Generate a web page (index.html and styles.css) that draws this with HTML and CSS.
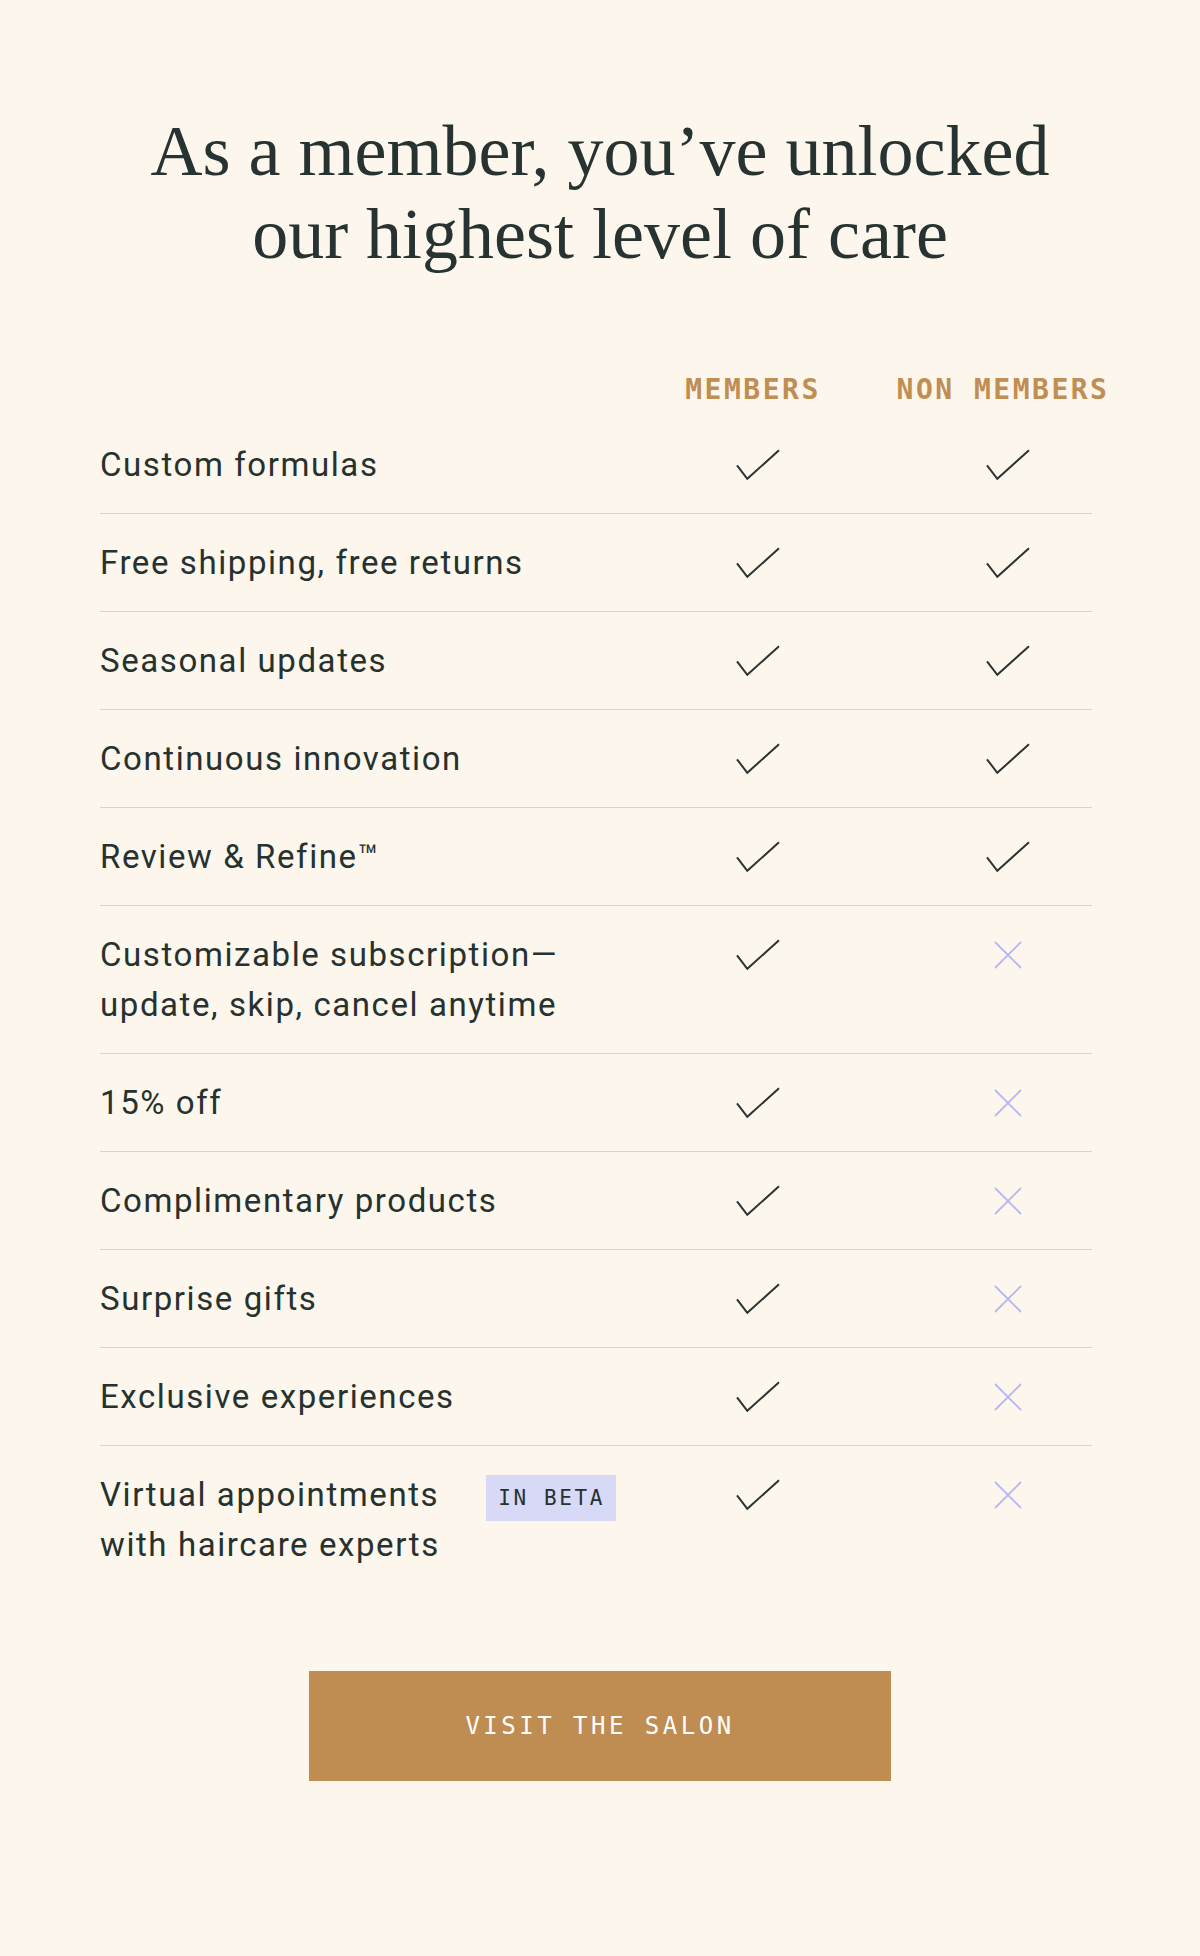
FILE: index.html
```html
<!DOCTYPE html>
<html lang="en">
<head>
<meta charset="utf-8">
<title>Membership comparison</title>
<link rel="stylesheet" href="styles.css">
</head>
<body>
<main class="page">
  <h1 class="title">As a member, you’ve unlocked<br>our highest level of care</h1>

  <section class="compare">
    <div class="compare-head">
      <span></span>
      <span class="col-label">MEMBERS</span>
      <span class="col-label">NON MEMBERS</span>
    </div>

    <div class="row">
      <div class="feature">Custom formulas</div>
      <div class="mark"><svg class="icon-check" viewBox="0 0 44 31" width="44" height="31"><path d="M1 16.3 L11.3 29.8 L43 1.2"/></svg></div>
      <div class="mark"><svg class="icon-check" viewBox="0 0 44 31" width="44" height="31"><path d="M1 16.3 L11.3 29.8 L43 1.2"/></svg></div>
    </div>
    <div class="row">
      <div class="feature">Free shipping, free returns</div>
      <div class="mark"><svg class="icon-check" viewBox="0 0 44 31" width="44" height="31"><path d="M1 16.3 L11.3 29.8 L43 1.2"/></svg></div>
      <div class="mark"><svg class="icon-check" viewBox="0 0 44 31" width="44" height="31"><path d="M1 16.3 L11.3 29.8 L43 1.2"/></svg></div>
    </div>
    <div class="row">
      <div class="feature">Seasonal updates</div>
      <div class="mark"><svg class="icon-check" viewBox="0 0 44 31" width="44" height="31"><path d="M1 16.3 L11.3 29.8 L43 1.2"/></svg></div>
      <div class="mark"><svg class="icon-check" viewBox="0 0 44 31" width="44" height="31"><path d="M1 16.3 L11.3 29.8 L43 1.2"/></svg></div>
    </div>
    <div class="row">
      <div class="feature">Continuous innovation</div>
      <div class="mark"><svg class="icon-check" viewBox="0 0 44 31" width="44" height="31"><path d="M1 16.3 L11.3 29.8 L43 1.2"/></svg></div>
      <div class="mark"><svg class="icon-check" viewBox="0 0 44 31" width="44" height="31"><path d="M1 16.3 L11.3 29.8 L43 1.2"/></svg></div>
    </div>
    <div class="row">
      <div class="feature">Review &amp; Refine™</div>
      <div class="mark"><svg class="icon-check" viewBox="0 0 44 31" width="44" height="31"><path d="M1 16.3 L11.3 29.8 L43 1.2"/></svg></div>
      <div class="mark"><svg class="icon-check" viewBox="0 0 44 31" width="44" height="31"><path d="M1 16.3 L11.3 29.8 L43 1.2"/></svg></div>
    </div>
    <div class="row">
      <div class="feature">Customizable subscription—update, skip, cancel anytime</div>
      <div class="mark"><svg class="icon-check" viewBox="0 0 44 31" width="44" height="31"><path d="M1 16.3 L11.3 29.8 L43 1.2"/></svg></div>
      <div class="mark"><svg class="icon-cross" viewBox="0 0 28 28" width="28" height="28"><path d="M1 1 L27 27 M27 1 L1 27"/></svg></div>
    </div>
    <div class="row">
      <div class="feature">15% off</div>
      <div class="mark"><svg class="icon-check" viewBox="0 0 44 31" width="44" height="31"><path d="M1 16.3 L11.3 29.8 L43 1.2"/></svg></div>
      <div class="mark"><svg class="icon-cross" viewBox="0 0 28 28" width="28" height="28"><path d="M1 1 L27 27 M27 1 L1 27"/></svg></div>
    </div>
    <div class="row">
      <div class="feature">Complimentary products</div>
      <div class="mark"><svg class="icon-check" viewBox="0 0 44 31" width="44" height="31"><path d="M1 16.3 L11.3 29.8 L43 1.2"/></svg></div>
      <div class="mark"><svg class="icon-cross" viewBox="0 0 28 28" width="28" height="28"><path d="M1 1 L27 27 M27 1 L1 27"/></svg></div>
    </div>
    <div class="row">
      <div class="feature">Surprise gifts</div>
      <div class="mark"><svg class="icon-check" viewBox="0 0 44 31" width="44" height="31"><path d="M1 16.3 L11.3 29.8 L43 1.2"/></svg></div>
      <div class="mark"><svg class="icon-cross" viewBox="0 0 28 28" width="28" height="28"><path d="M1 1 L27 27 M27 1 L1 27"/></svg></div>
    </div>
    <div class="row">
      <div class="feature">Exclusive experiences</div>
      <div class="mark"><svg class="icon-check" viewBox="0 0 44 31" width="44" height="31"><path d="M1 16.3 L11.3 29.8 L43 1.2"/></svg></div>
      <div class="mark"><svg class="icon-cross" viewBox="0 0 28 28" width="28" height="28"><path d="M1 1 L27 27 M27 1 L1 27"/></svg></div>
    </div>
    <div class="row">
      <div class="feature feature-badge">
        <span class="feature-text">Virtual appointments with haircare experts</span>
        <span class="badge">IN BETA</span>
      </div>
      <div class="mark"><svg class="icon-check" viewBox="0 0 44 31" width="44" height="31"><path d="M1 16.3 L11.3 29.8 L43 1.2"/></svg></div>
      <div class="mark"><svg class="icon-cross" viewBox="0 0 28 28" width="28" height="28"><path d="M1 1 L27 27 M27 1 L1 27"/></svg></div>
    </div>
  </section>

  <div class="cta">
    <a class="btn" href="#">VISIT THE SALON</a>
  </div>
</main>
</body>
</html>
```

FILE: styles.css
```css
html, body {
  margin: 0;
  padding: 0;
  background: #fdf6ec;
}

.page {
  min-height: 1956px;
  box-sizing: border-box;
  padding-top: 110px;
  color: #26322f;
}

.title {
  margin: 0;
  text-align: center;
  font-family: "Liberation Serif", "Times New Roman", serif;
  font-weight: 400;
  font-size: 72px;
  line-height: 83px;
  color: #263331;
}

.compare {
  margin-left: 100px;
  width: 992px;
}

.compare-head {
  display: grid;
  grid-template-columns: 533px 250px 250px;
  padding: 100px 0 12px;
}

.col-label {
  text-align: center;
  padding-right: 10px;
  font-family: "DejaVu Sans Mono", monospace;
  font-weight: 700;
  font-size: 28px;
  line-height: 28px;
  letter-spacing: 2.5px;
  color: #c08d52;
  white-space: nowrap;
}

.row {
  display: grid;
  grid-template-columns: 533px 250px 250px;
  padding: 23.5px 0;
  border-bottom: 1px solid #ead2a3;
}

.row:last-child {
  border-bottom: none;
}

.feature {
  padding-right: 17px;
  font-family: Roboto, "Liberation Sans", sans-serif;
  font-size: 33px;
  line-height: 50px;
  letter-spacing: 0.048em;
  color: #26322f;
}

.feature-badge {
  display: flex;
  align-items: flex-start;
}

.feature-text {
  flex: 1;
}

.badge {
  flex: none;
  margin-top: 5px;
  height: 46px;
  box-sizing: border-box;
  padding: 0 11px 0 12px;
  display: flex;
  align-items: center;
  background: #d8d9f6;
  font-family: "DejaVu Sans Mono", monospace;
  font-size: 21px;
  letter-spacing: 2.6px;
  color: #26322f;
}

.mark {
  align-self: start;
  height: 50px;
  display: flex;
  align-items: center;
  justify-content: center;
}

.icon-check path {
  fill: none;
  stroke: #2a3432;
  stroke-width: 2;
}

.icon-cross path {
  fill: none;
  stroke: #b6b7f4;
  stroke-width: 1.8;
}

.cta {
  display: flex;
  justify-content: center;
  margin-top: 78px;
}

.btn {
  width: 582px;
  height: 110px;
  display: flex;
  align-items: center;
  justify-content: center;
  background: #bf8c52;
  color: #ffffff;
  text-decoration: none;
  font-family: "DejaVu Sans Mono", monospace;
  font-size: 24px;
  letter-spacing: 3.5px;
}
```
